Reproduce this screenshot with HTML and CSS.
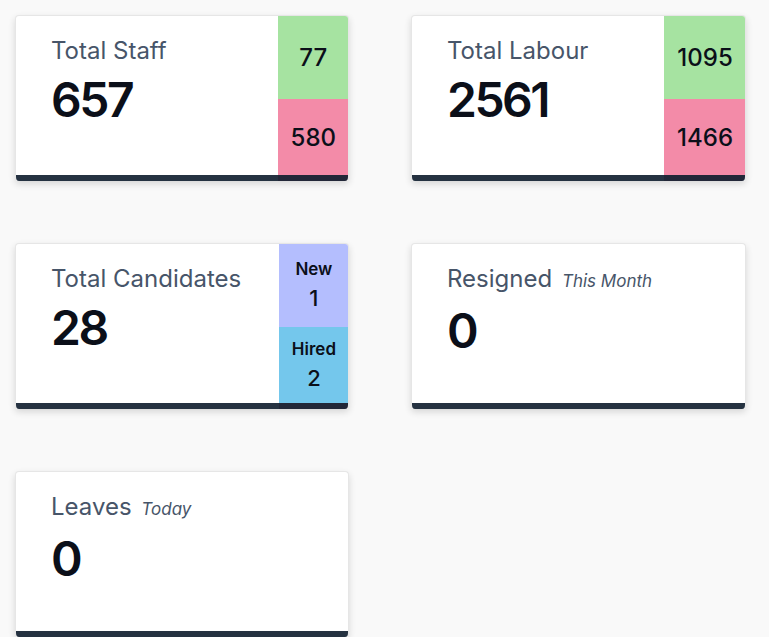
FILE: index.html
```html
<!DOCTYPE html>
<html>
<head>
<meta charset="utf-8">
<link rel="stylesheet" href="styles.css">
</head>
<body>
<div class="grid">
  <div class="card">
    <div class="main">
      <div class="title">Total Staff</div>
      <div class="value">657</div>
    </div>
    <div class="side">
      <div class="cell top green"><span class="num">77</span></div>
      <div class="cell bottom red"><span class="num">580</span></div>
    </div>
  </div>
  <div class="card">
    <div class="main">
      <div class="title">Total Labour</div>
      <div class="value">2561</div>
    </div>
    <div class="side">
      <div class="cell top green"><span class="num">1095</span></div>
      <div class="cell bottom red"><span class="num">1466</span></div>
    </div>
  </div>
  <div class="card">
    <div class="main">
      <div class="title">Total Candidates</div>
      <div class="value">28</div>
    </div>
    <div class="side">
      <div class="cell top lavender stack"><span class="label">New</span><span class="small-num">1</span></div>
      <div class="cell bottom sapphire stack"><span class="label">Hired</span><span class="small-num">2</span></div>
    </div>
  </div>
  <div class="card">
    <div class="main">
      <div class="title">Resigned <em class="sub">This Month</em></div>
      <div class="value">0</div>
    </div>
  </div>
  <div class="card">
    <div class="main">
      <div class="title">Leaves <em class="sub">Today</em></div>
      <div class="value">0</div>
    </div>
  </div>
</div>
</body>
</html>
```
FILE: styles.css
```css
html, body {
  margin: 0;
  padding: 0;
  background: #f9f9f9;
  font-family: Inter, "Noto Sans", sans-serif;
}
.grid {
  display: grid;
  grid-template-columns: 334px 335px;
  column-gap: 62px;
  row-gap: 62px;
  padding: 15px 0 0 15px;
}
.card {
  display: flex;
  height: 166px;
  box-sizing: border-box;
  background: #fff;
  border: 1px solid #e6e6e6;
  border-bottom: none;
  border-radius: 4px;
  box-shadow: 0 3px 7px rgba(0,0,0,0.14);
  overflow: hidden;
}
.main {
  flex: 1;
  padding: 20px 0 0 35px;
  border-bottom: 6px solid #253241;
}
.title {
  font-size: 24px;
  color: #475569;
  line-height: 29px;
}
.sub {
  font-size: 17px;
  font-style: italic;
  margin-left: 3px;
}
.value {
  font-size: 48px;
  font-weight: 600;
  letter-spacing: -2.5px;
  color: #0b0f19;
  line-height: 58px;
  margin-top: 6px;
}
.side {
  display: flex;
  flex-direction: column;
  margin-top: -1px;
  margin-right: -1px;
  border-bottom: 6px solid #222738;
}
.cell {
  display: flex;
  align-items: center;
  justify-content: center;
  padding: 0 13px;
  min-width: 44px;
}
.cell.top { height: 84px; }
.cell.bottom { flex: 1; }
.num {
  font-size: 24px;
  font-weight: 500;
  color: #0b0f19;
}
.stack {
  flex-direction: column;
}
.label {
  font-size: 17px;
  font-weight: 600;
  color: #0b0f19;
  line-height: 20px;
}
.small-num {
  font-size: 22px;
  font-weight: 500;
  color: #0b0f19;
  line-height: 27px;
  margin-top: 6px;
}
.green { background: #a6e3a1; }
.red { background: #f38ba8; }
.lavender { background: #b4befe; }
.sapphire { background: #74c7ec; }
```
